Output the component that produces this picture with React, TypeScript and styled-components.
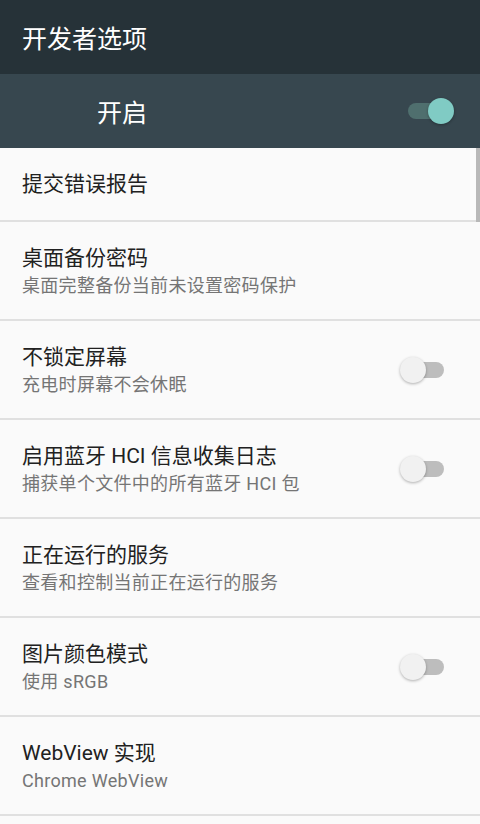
import { FC } from "react";
import styled, { createGlobalStyle } from "styled-components";

const GlobalStyle = createGlobalStyle`
  html, body {
    margin: 0;
    padding: 0;
    background: #fafafa;
  }
  body {
    font-family: "Roboto", "Noto Sans CJK SC", sans-serif;
  }
`;

type Item = {
  title: string;
  summary?: string;
  toggle?: boolean;
};

const items: Item[] = [
  { title: "桌面备份密码", summary: "桌面完整备份当前未设置密码保护" },
  { title: "不锁定屏幕", summary: "充电时屏幕不会休眠", toggle: true },
  {
    title: "启用蓝牙 HCI 信息收集日志",
    summary: "捕获单个文件中的所有蓝牙 HCI 包",
    toggle: true,
  },
  { title: "正在运行的服务", summary: "查看和控制当前正在运行的服务" },
  { title: "图片颜色模式", summary: "使用 sRGB", toggle: true },
  { title: "WebView 实现", summary: "Chrome WebView" },
];

export default function App() {
  return (
    <Screen>
      <GlobalStyle />
      <Toolbar>开发者选项</Toolbar>
      <MasterBar>
        <MasterLabel>开启</MasterLabel>
        <Switch on />
      </MasterBar>
      <List>
        <Scrollbar />
        <ShortRow>
          <Title>提交错误报告</Title>
        </ShortRow>
        {items.map((it) => (
          <Row key={it.title}>
            <Texts>
              <Title>{it.title}</Title>
              {it.summary && <Summary>{it.summary}</Summary>}
            </Texts>
            {it.toggle && <Switch />}
          </Row>
        ))}
      </List>
    </Screen>
  );
}

const Switch: FC<{ on?: boolean }> = ({ on }) => (
  <SwitchBox>
    <Track on={on} />
    <Thumb on={on} />
  </SwitchBox>
);

const Screen = styled.div`
  width: 480px;
  height: 824px;
  overflow: hidden;
  background: #fafafa;
  font-family: "Roboto", "Noto Sans CJK SC", sans-serif;
`;

const Toolbar = styled.div`
  height: 74px;
  background: #263238;
  color: #ffffff;
  font-size: 25px;
  display: flex;
  align-items: center;
  padding-left: 22px;
  box-sizing: border-box;
`;

const MasterBar = styled.div`
  height: 74px;
  background: #37474f;
  display: flex;
  align-items: center;
  justify-content: space-between;
  padding: 0 26px 0 97px;
  box-sizing: border-box;
`;

const MasterLabel = styled.div`
  color: #ffffff;
  font-size: 25px;
`;

const List = styled.div`
  position: relative;
`;

const Scrollbar = styled.div`
  position: absolute;
  right: 0;
  top: 0;
  width: 4px;
  height: 74px;
  background: #b8b8b8;
`;

const ShortRow = styled.div`
  height: 72px;
  display: flex;
  align-items: center;
  padding: 0 22px;
  border-bottom: 2px solid #e0e0e0;
`;

const Row = styled.div`
  height: 97px;
  display: flex;
  align-items: center;
  justify-content: space-between;
  padding: 0 34px 0 22px;
  border-bottom: 2px solid #e0e0e0;
`;

const Texts = styled.div`
  display: flex;
  flex-direction: column;
  margin-top: 2px;
`;

const Title = styled.div`
  color: #212121;
  font-size: 21px;
  line-height: 28px;
`;

const Summary = styled.div`
  color: #757575;
  font-size: 18px;
  line-height: 28px;
  letter-spacing: 0.3px;
`;

const SwitchBox = styled.div`
  position: relative;
  width: 46px;
  height: 28px;
`;

const Track = styled.div<{ on?: boolean }>`
  position: absolute;
  left: ${(p) => (p.on ? "0" : "6px")};
  right: ${(p) => (p.on ? "8px" : "2px")};
  top: 6px;
  height: 16px;
  border-radius: 8px;
  background: ${(p) => (p.on ? "#4f6f6e" : "#bdbdbd")};
`;

const Thumb = styled.div<{ on?: boolean }>`
  position: absolute;
  top: 1px;
  ${(p) => (p.on ? "right: 0;" : "left: 0;")}
  width: 26px;
  height: 26px;
  border-radius: 50%;
  background: ${(p) => (p.on ? "#80cbc4" : "#f1f1f1")};
  box-shadow: 0 1px 3px rgba(0, 0, 0, 0.3);
`;
